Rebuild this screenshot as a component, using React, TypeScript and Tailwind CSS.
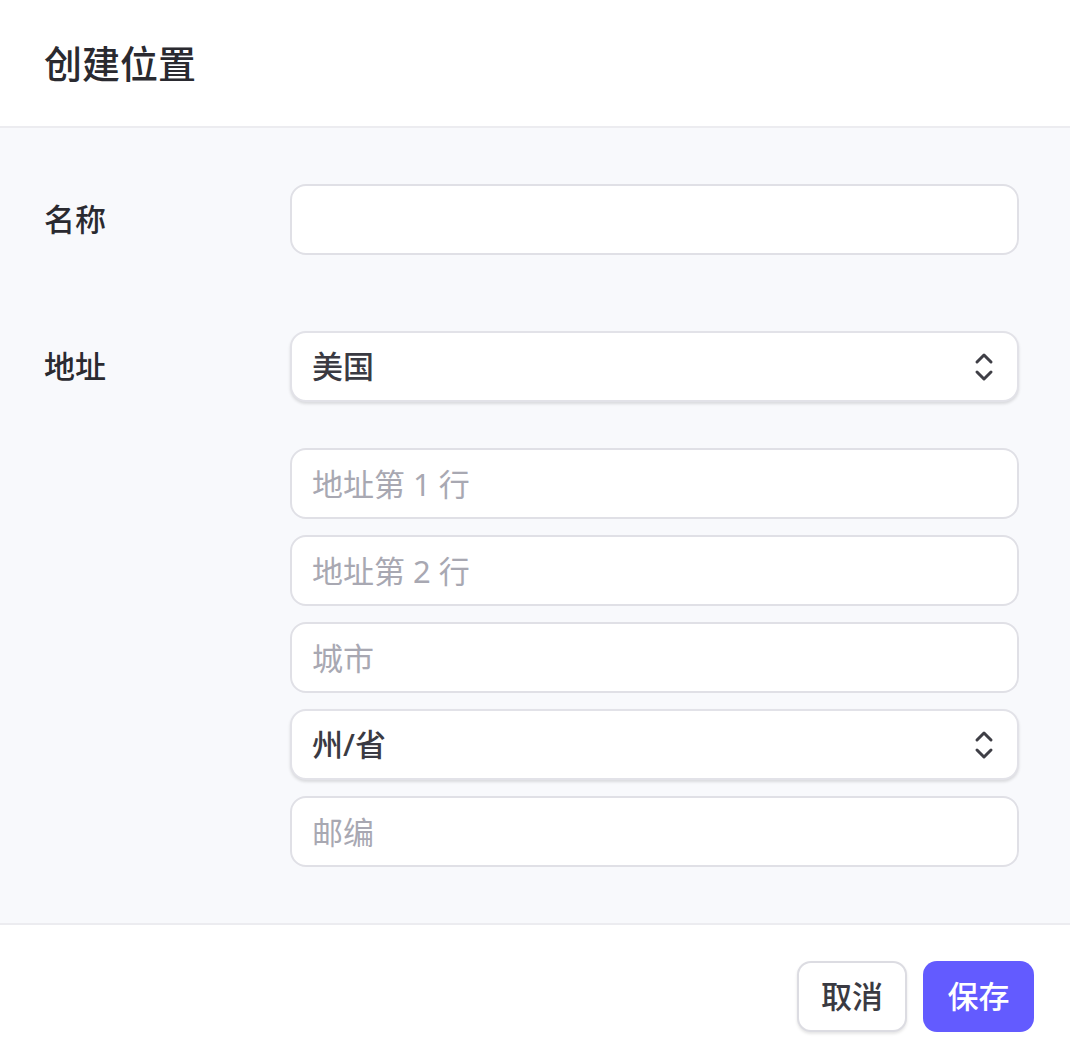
import React from "react";

const font = { fontFamily: '"Noto Sans", "Noto Sans CJK SC", sans-serif' };

const Chevrons = () => (
  <svg width="22" height="30" viewBox="0 0 22 30" fill="none" stroke="#3f3f46" strokeWidth="3" strokeLinecap="round" strokeLinejoin="round">
    <path d="M4 10l7-7 7 7" />
    <path d="M4 20l7 7 7-7" />
  </svg>
);

const TextField = ({ placeholder }: { placeholder?: string }) => (
  <input
    placeholder={placeholder}
    className="w-full h-[71px] rounded-[16px] border-2 border-[#e0e0e6] bg-white px-[20px] text-[31px] text-[#3f3f46] placeholder:text-[#a8a8b2] outline-none"
  />
);

const SelectField = ({ value }: { value: string }) => (
  <div className="w-full h-[71px] rounded-[16px] border-2 border-[#e2e2e8] bg-white pl-[20px] pr-[22px] flex items-center justify-between shadow-[0_2px_3px_rgba(0,0,0,0.12)]">
    <span className="text-[31px] font-medium text-[#3a3a42]">{value}</span>
    <Chevrons />
  </div>
);

export default function App() {
  return (
    <div className="w-[1070px] h-[1058px] bg-white flex flex-col" style={font}>
      <header className="h-[128px] shrink-0 flex items-center pl-[44px] border-b-2 border-[#ececf0]">
        <h1 className="text-[38px] font-medium text-[#2a2a30]">创建位置</h1>
      </header>
      <main className="flex-1 bg-[#f8f9fc] pt-[56px] pb-[54px] pr-[51px] flex flex-col gap-[76px]">
        <div className="flex items-center">
          <label className="w-[290px] shrink-0 pl-[44px] text-[31px] font-medium text-[#2a2a30]">名称</label>
          <TextField />
        </div>
        <div className="flex items-start">
          <label className="w-[290px] shrink-0 pl-[44px] h-[71px] flex items-center text-[31px] font-medium text-[#2a2a30]">地址</label>
          <div className="flex-1 flex flex-col">
            <SelectField value="美国" />
            <div className="mt-[46px] flex flex-col gap-[16px]">
              <TextField placeholder="地址第 1 行" />
              <TextField placeholder="地址第 2 行" />
              <TextField placeholder="城市" />
              <SelectField value="州/省" />
              <TextField placeholder="邮编" />
            </div>
          </div>
        </div>
      </main>
      <footer className="h-[135px] shrink-0 border-t-2 border-[#ececf0] flex items-start justify-end gap-[16px] pt-[36px] pr-[36px]">
        <button className="h-[71px] w-[110px] rounded-[14px] border-2 border-[#dcdce2] bg-white text-[31px] font-medium text-[#3a3a42] shadow-[0_2px_3px_rgba(0,0,0,0.1)]">取消</button>
        <button className="h-[71px] w-[111px] rounded-[14px] bg-[#635bff] text-[31px] font-medium text-white">保存</button>
      </footer>
    </div>
  );
}
